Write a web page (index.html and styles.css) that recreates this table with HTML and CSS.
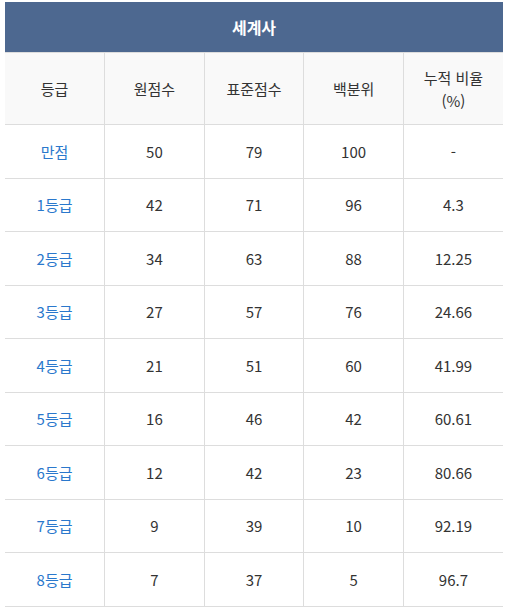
FILE: index.html
```html
<!DOCTYPE html>
<html lang="ko">
<head>
<meta charset="utf-8">
<link rel="stylesheet" href="styles.css">
</head>
<body>
<div class="wrap">
<table class="grade">
  <thead>
    <tr><th class="title" colspan="5">세계사</th></tr>
    <tr class="head">
      <th>등급</th><th>원점수</th><th>표준점수</th><th>백분위</th><th>누적 비율<br>(%)</th>
    </tr>
  </thead>
  <tbody>
    <tr><td class="g">만점</td><td>50</td><td>79</td><td>100</td><td>-</td></tr>
    <tr><td class="g">1등급</td><td>42</td><td>71</td><td>96</td><td>4.3</td></tr>
    <tr><td class="g">2등급</td><td>34</td><td>63</td><td>88</td><td>12.25</td></tr>
    <tr><td class="g">3등급</td><td>27</td><td>57</td><td>76</td><td>24.66</td></tr>
    <tr><td class="g">4등급</td><td>21</td><td>51</td><td>60</td><td>41.99</td></tr>
    <tr><td class="g">5등급</td><td>16</td><td>46</td><td>42</td><td>60.61</td></tr>
    <tr><td class="g">6등급</td><td>12</td><td>42</td><td>23</td><td>80.66</td></tr>
    <tr><td class="g">7등급</td><td>9</td><td>39</td><td>10</td><td>92.19</td></tr>
    <tr><td class="g">8등급</td><td>7</td><td>37</td><td>5</td><td>96.7</td></tr>
  </tbody>
</table>
</div>
</body>
</html>
```
FILE: styles.css
```css
html, body {
  margin: 0;
  padding: 0;
  background: #ffffff;
}
.wrap {
  padding: 2px 7px 0 5px;
}
.grade {
  width: 498px;
  border-collapse: collapse;
  table-layout: fixed;
  font-family: "Noto Sans CJK KR", "Noto Sans", sans-serif;
  font-size: 15px;
  color: #333333;
}
.grade th, .grade td {
  border: 1px solid #dddddd;
  text-align: center;
  vertical-align: middle;
  padding: 0;
  font-weight: normal;
}
.grade .title {
  background: #4d6890;
  color: #ffffff;
  font-weight: bold;
  font-size: 16px;
  height: 50px;
  border: none;
  border-bottom: 1px solid #dddddd;
}
.grade .head th {
  background: #f9f9f9;
  height: 71px;
  line-height: 23px;
  color: #333333;
}
.grade .head th:first-child, .grade td:first-child {
  border-left: none;
}
.grade .head th:last-child, .grade td:last-child {
  border-right: none;
}
.grade td {
  height: 52.5px;
}
.grade td.g {
  color: #2a78cc;
}
```
